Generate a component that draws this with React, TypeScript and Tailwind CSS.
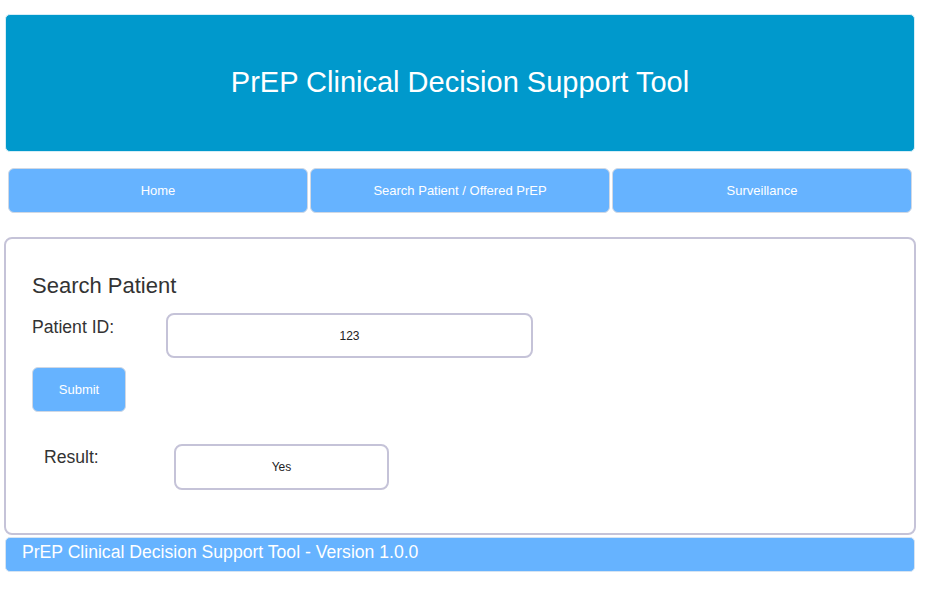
export default function App() {
  return (
    <div className="min-h-screen bg-white font-['Liberation_Sans',Arial,sans-serif] text-[#333]">
      <div className="ml-[5px] w-[910px] pt-[14px]">
        <header className="flex h-[138px] items-center justify-center rounded-[5px] border border-[#d6eef7] bg-[#0099cc]">
          <h1 className="text-[29px] text-white">PrEP Clinical Decision Support Tool</h1>
        </header>

        <nav className="mt-[16px] ml-[3px] flex w-[904px] gap-[2px]">
          {["Home", "Search Patient / Offered PrEP", "Surveillance"].map((label) => (
            <a
              key={label}
              href="#"
              className="flex h-[45px] flex-1 items-center justify-center rounded-[6px] border border-[#d0d8e4] bg-[#66b3ff] text-[13px] text-white"
            >
              {label}
            </a>
          ))}
        </nav>

        <main className="mt-[24px] -ml-px h-[298px] w-[912px] rounded-[8px] border-2 border-[#c5c3d8] px-[26px] pt-[30px]">
          <h2 className="text-[22px] text-[#333]">Search Patient</h2>
          <div className="mt-[11px] flex items-start">
            <label className="w-[134px] pt-px text-[17.6px] text-[#333]">Patient ID:</label>
            <input
              defaultValue="123"
              className="h-[45px] w-[367px] rounded-[8px] border-2 border-[#c5c3d8] text-center text-[12px] text-[#222] outline-none"
            />
          </div>
          <button className="mt-[9px] h-[45px] w-[94px] rounded-[6px] border border-[#d0d8e4] bg-[#66b3ff] text-[13px] text-white">
            Submit
          </button>
          <div className="mt-[32px] flex items-start pl-[12px]">
            <span className="w-[130px] text-[17.6px] text-[#333]">Result:</span>
            <div className="flex h-[46px] w-[215px] items-center justify-center rounded-[8px] border-2 border-[#c5c3d8] text-[12px] text-[#222]">
              Yes
            </div>
          </div>
        </main>

        <footer className="mt-[2px] h-[35px] rounded-[5px] border border-[#d6e4f2] bg-[#66b3ff] px-[16px] pt-px text-[17.6px] text-white">
          PrEP Clinical Decision Support Tool - Version 1.0.0
        </footer>
      </div>
    </div>
  );
}
